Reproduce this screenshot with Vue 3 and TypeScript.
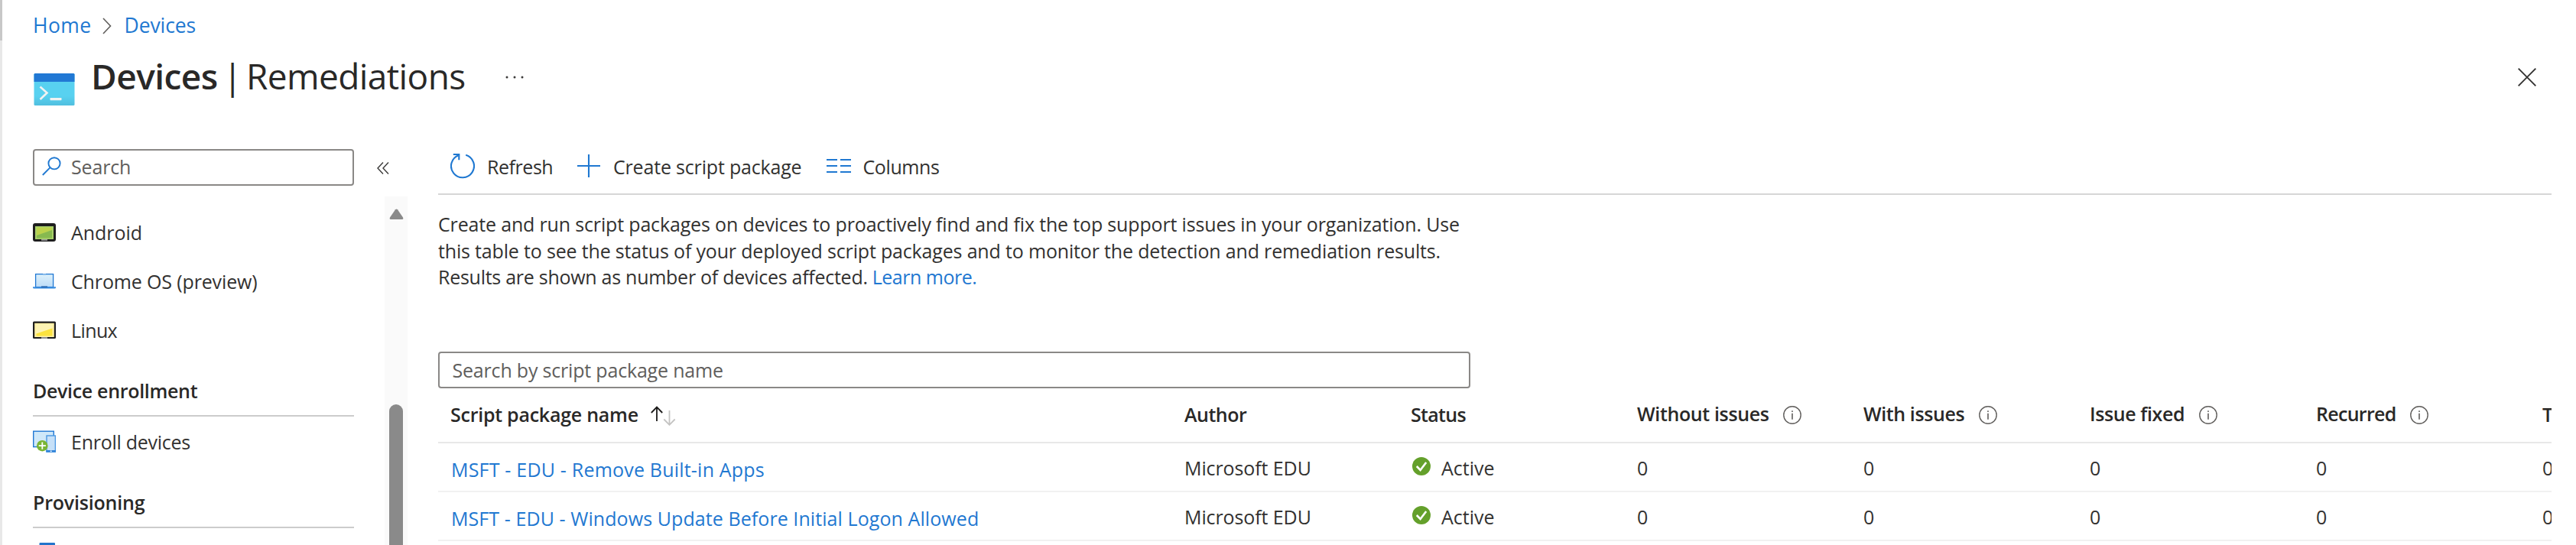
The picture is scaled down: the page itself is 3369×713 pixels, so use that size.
<script setup lang="ts">
interface Column { label: string; track: number; info?: boolean }
interface Row { name: string; track: number; author: string; status: string; counts: number[] }

const columns: Column[] = [
  { label: 'Author', track: -0.5 },
  { label: 'Status', track: -0.7 },
  { label: 'Without issues', track: -0.36, info: true },
  { label: 'With issues', track: -0.4, info: true },
  { label: 'Issue fixed', track: -0.4, info: true },
  { label: 'Recurred', track: -0.7, info: true },
  { label: 'Total', track: -0.4 },
]
const rows: Row[] = [
  { name: 'MSFT - EDU - Remove Built-in Apps', track: 0.2, author: 'Microsoft EDU', status: 'Active', counts: [0, 0, 0, 0, 0] },
  { name: 'MSFT - EDU - Windows Update Before Initial Logon Allowed', track: 0.08, author: 'Microsoft EDU', status: 'Active', counts: [0, 0, 0, 0, 0] },
]
const platforms = [
  { id: 'android', label: 'Android', track: -0.05 },
  { id: 'chrome', label: 'Chrome OS (preview)', track: -0.14 },
  { id: 'linux', label: 'Linux', track: -0.6 },
]
const ls = (px: number) => ({ letterSpacing: px + 'px' })
</script>

<template>
  <div class="page">
    <div class="edge"><div class="edge-top"></div></div>
    <header>
      <nav class="crumbs">
        <a class="home">Home</a>
        <svg width="12" height="22" viewBox="0 0 12 22"><path d="M1 1L10.5 11L1 21" fill="none" stroke="#605e5c" stroke-width="1.6" /></svg>
        <a class="dev">Devices</a>
      </nav>
      <div class="title-row">
        <svg class="blade-icon" width="54" height="44" viewBox="0 0 54 44">
          <defs><linearGradient id="term" x1="0" y1="0" x2="0" y2="1"><stop offset="0.7" stop-color="#58d1f0" /><stop offset="1" stop-color="#50bfdf" /></linearGradient></defs>
          <rect x="0.5" y="1" width="53" height="42" rx="1.5" fill="url(#term)" />
          <path d="M0.5 12V2.5Q0.5 1 2 1H52Q53.5 1 53.5 2.5V12Z" fill="#2178d4" />
          <path d="M8.5 18.5L17.5 26.5L8.5 35" fill="none" stroke="#f2f2f2" stroke-width="2.6" />
          <rect x="21.5" y="33" width="15" height="3.2" rx="0.6" fill="#f2f2f2" />
        </svg>
        <h1><b>Devices</b><span class="bar">|</span><span class="sub">Remediations</span></h1>
        <svg class="dots" width="24" height="4" viewBox="0 0 24 4" fill="#3b3a39"><circle cx="2" cy="2" r="1.5" /><circle cx="12" cy="2" r="1.5" /><circle cx="22" cy="2" r="1.5" /></svg>
        <svg class="close" width="24" height="24" viewBox="0 0 24 24"><path d="M0.7 0.7L23.3 23.3M23.3 0.7L0.7 23.3" stroke="#323130" stroke-width="1.9" /></svg>
      </div>
    </header>

    <div class="body">
      <aside>
        <div class="side-top">
          <div class="search side-search">
            <svg width="25" height="25" viewBox="0 0 25 25" fill="none" stroke="#1f78d1" stroke-width="1.9"><circle cx="16" cy="8.8" r="7.6" /><path d="M10.6 14.2L0.8 24" /></svg>
            <span>Search</span>
          </div>
          <svg class="collapse" width="16" height="16" viewBox="0 0 16 16" fill="none" stroke="#3b3a39" stroke-width="1.4"><path d="M8 0.5L1 8L8 15.5M15 0.5L8 8L15 15.5" /></svg>
        </div>
        <div class="side-list">
          <div class="menu">
            <div v-for="p in platforms" :key="p.id" class="item">
              <svg width="30" height="32" viewBox="0 0 30 32">
                <template v-if="p.id === 'android'">
                  <rect x="0" y="4" width="30" height="24" rx="3" fill="#1e1e1e" />
                  <rect x="3" y="8" width="24" height="17" fill="#a8d06a" />
                  <path d="M5 9.5H25V13L5 20Z" fill="#bcd24b" /><path d="M5 20L25 13V23.5H5Z" fill="#87b94f" />
                  <rect x="11" y="25" width="8" height="1.8" fill="#999" />
                </template>
                <template v-else-if="p.id === 'chrome'">
                  <defs><linearGradient id="lap" x1="0" y1="0" x2="0" y2="1"><stop offset="0" stop-color="#ddf1fb" /><stop offset="1" stop-color="#bddcf7" /></linearGradient></defs>
                  <rect x="3.6" y="6.6" width="23" height="17" fill="url(#lap)" stroke="#2178d4" stroke-width="1.3" />
                  <path d="M0 23.2H30V24.4Q30 25.4 28 25.4H2Q0 25.4 0 24.4Z" fill="#3a8de0" />
                  <rect x="11" y="22.4" width="8" height="1.8" fill="#2566b0" /><rect x="13" y="6" width="4" height="1.6" fill="#7db4ea" />
                </template>
                <template v-else>
                  <rect x="0" y="4.5" width="30" height="22.5" rx="1.5" fill="#1e1e1e" />
                  <rect x="2.2" y="6.8" width="25.6" height="18.2" fill="#fff0a6" />
                  <path d="M4.5 8.5H25.5V13.5L4.5 21Z" fill="#fdf3b4" /><path d="M4.5 20.5L25.5 13.5V23.5H4.5Z" fill="#fbe23f" />
                  <rect x="11" y="25" width="8" height="2" fill="#8c8c8c" />
                </template>
              </svg>
              <span :style="ls(p.track)">{{ p.label }}</span>
            </div>
            <h2 class="enr">Device enrollment</h2>
            <div class="item">
              <svg width="30" height="32" viewBox="0 0 30 32">
                <rect x="0.7" y="2.2" width="26.6" height="20.4" fill="#cfe8f9" stroke="#2178d4" stroke-width="1.4" />
                <rect x="18" y="8" width="11.4" height="21" fill="#c6e0f8" stroke="#4a97e2" stroke-width="1.4" />
                <rect x="17.3" y="27" width="12.7" height="2.6" fill="#2f83d9" /><rect x="22.8" y="27.6" width="1.8" height="1.4" fill="#fff" />
                <circle cx="12.3" cy="21.2" r="7.3" fill="#7ab535" />
                <path d="M12.3 16.6V25.8M7.7 21.2H16.9" stroke="#fff" stroke-width="1.8" />
              </svg>
              <span class="enr-item">Enroll devices</span>
            </div>
            <h2 class="prov">Provisioning</h2>
            <div class="item cut">
              <svg width="30" height="28" viewBox="0 0 30 28"><rect x="8.5" y="0" width="20.5" height="26" rx="1" fill="#2374cb" /></svg>
            </div>
          </div>
          <div class="scroll">
            <svg width="19" height="15" viewBox="0 0 19 15"><path d="M8 1.2Q9.5 -0.4 11 1.2L18 11.5Q19 14 17 14H2Q0 14 1 11.5Z" fill="#8a8a8a" /></svg>
            <div class="thumb"></div>
          </div>
        </div>
      </aside>

      <main>
        <div class="toolbar">
          <svg class="ref" width="32" height="34" viewBox="0 0 32 34" fill="none" stroke="#1f78d1" stroke-width="2.1"><path d="M20.2 2.8A15 15 0 1 1 10.6 3.2" /><path d="M3.8 2H11.3V9.2" /></svg>
          <span class="t-ref">Refresh</span>
          <svg class="plus" width="30" height="30" viewBox="0 0 30 30"><path d="M15 0V30M0 15H30" stroke="#1f78d1" stroke-width="2.1" /></svg>
          <span class="t-create">Create script package</span>
          <svg class="cols" width="32" height="18" viewBox="0 0 32 18"><path d="M0 1H14M18 1H32M0 9H14M18 9H32M0 17H14M18 17H32" stroke="#1f78d1" stroke-width="2" /></svg>
          <span class="t-cols">Columns</span>
        </div>
        <p class="intro">
          <span class="l1">Create and run script packages on devices to proactively find and fix the top support issues in your organization. Use</span><br>
          <span class="l2">this table to see the status of your deployed script packages and to monitor the detection and remediation results.</span><br>
          <span class="l3">Results are shown as number of devices affected.</span><a>Learn more.</a>
        </p>
        <div class="search main-search"><span>Search by script package name</span></div>
        <div class="table">
          <div class="row head">
            <div class="cell">
              <span class="spn">Script package name</span>
              <svg class="sort" width="34" height="26" viewBox="0 0 34 26" fill="none" stroke-width="1.8"><path d="M9 20V2M1.8 9L9 1.6L16.2 9" stroke="#1b1a19" /><path d="M25.5 6V24M18.3 17.5L25.5 24.8L32.7 17.5" stroke="#c4c3c2" /></svg>
            </div>
            <div v-for="c in columns" :key="c.label" class="cell" :class="{ metric: c.info }">
              <span :style="ls(c.track)">{{ c.label }}</span>
              <svg v-if="c.info" class="info" width="24" height="24" viewBox="0 0 24 24"><circle cx="12" cy="12" r="11.2" fill="none" stroke="#605e5c" stroke-width="1.4" /><path d="M12 9.8V17.8M12 6.2V8" stroke="#605e5c" stroke-width="1.6" /></svg>
            </div>
          </div>
          <div v-for="r in rows" :key="r.name" class="row">
            <div class="cell link"><a :style="ls(r.track)">{{ r.name }}</a></div>
            <div class="cell author">{{ r.author }}</div>
            <div class="cell status">
              <svg width="24" height="24" viewBox="0 0 24 24"><circle cx="12" cy="12" r="12" fill="#64a02b" /><path d="M5.8 12L10.6 17L18.2 7" fill="none" stroke="#fff" stroke-width="2.6" /></svg>
              <span>{{ r.status }}</span>
            </div>
            <div v-for="(n, i) in r.counts" :key="i" class="cell">{{ n }}</div>
          </div>
        </div>
      </main>
    </div>
  </div>
</template>

<style>
body { background: #fff; }
</style>
<style scoped>
.page { position: relative; width: 3369px; height: 713px; overflow: hidden; box-sizing: border-box; padding-left: 44px; font: 25px/34px "Open Sans", "Noto Sans", sans-serif; color: #323130; background: #fff; }
.page * { box-sizing: border-box; }
svg { display: block; flex: none; }
span, a { white-space: nowrap; }
a { color: #1f78d1; }
.edge { position: absolute; left: 0; top: 0; width: 3px; height: 713px; background: #e8e8e8; }
.edge-top { height: 53px; background: #c8c8c8; }
header { height: 194px; padding-top: 15px; }
.crumbs { display: flex; align-items: center; height: 36px; line-height: 36px; font-size: 26.5px; margin-left: -1px; }
.home { letter-spacing: 0.4px; width: 91px; }
.crumbs svg { margin-top: 2px; }
.dev { letter-spacing: -0.1px; margin-left: 16.5px; }
.title-row { display: flex; align-items: flex-start; padding-top: 16px; }
.blade-icon { margin-top: 27.5px; }
h1 { display: flex; margin: 0 0 0 21px; font-size: 46px; line-height: 64px; font-weight: 400; letter-spacing: -0.52px; color: #292827; width: 508px; }
h1 b { font-weight: 600; width: 172.5px; }
h1 .bar { width: 30.5px; }
h1 .sub { letter-spacing: -0.6px; }
.dots { margin: 32px 0 0 34px; }
.close { margin: 22px 52px 0 auto; }
.body { display: flex; height: 519px; }
aside { width: 529px; flex: none; padding-top: 1px; margin-left: -1px; }
.side-top { display: flex; height: 62px; align-items: flex-start; }
.search { border: 2px solid #8a8886; border-radius: 4px; height: 48px; display: flex; align-items: center; color: #605e5c; background: #fff; }
.side-search { width: 420px; padding-left: 10px; letter-spacing: -0.15px; }
.side-search svg { margin-top: -3px; }
.side-search span { margin: -2px 0 0 13px; }
.collapse { margin: 17px 0 0 30px; }
.side-list { display: flex; height: 456px; overflow: hidden; }
.menu { width: 420px; padding-top: 15px; flex: none; }
.item { display: flex; align-items: center; height: 64px; line-height: 64px; }
.item svg { margin-right: 20px; }
h2 { margin: 27px 0 1px; height: 54px; line-height: 40px; font-size: 25px; font-weight: 600; border-bottom: 2px solid #cccccc; color: #292827; }
.enr { letter-spacing: -0.32px; }
.prov { letter-spacing: -0.2px; }
.enr-item { letter-spacing: -0.26px; }
.cut { align-items: flex-start; padding-top: 18px; }
.scroll { margin-left: 40px; width: 30px; background: #fafafa; height: 456px; padding: 16px 0 0 6px; }
.thumb { width: 18px; height: 300px; margin-top: 241px; border-radius: 9px; background: #8a8a8a; }
main { width: 2764px; margin-left: 1px; flex: none; overflow: hidden; }
.toolbar { display: flex; height: 61px; border-bottom: 2px solid #d6d6d6; line-height: 48px; }
.ref { margin: 6px 0 0 16px; }
.t-ref { margin-left: 16px; width: 94px; letter-spacing: -0.45px; }
.plus { margin: 8px 0 0 24px; }
.t-create { margin-left: 17px; width: 262px; letter-spacing: -0.18px; }
.cols { margin: 14px 0 0 17px; }
.t-cols { margin-left: 15.5px; letter-spacing: -0.4px; }
.intro { margin: 21px 0 0; height: 184px; line-height: 34.7px; }
.l1 { letter-spacing: -0.163px; }
.l2 { letter-spacing: -0.17px; }
.l3 { letter-spacing: -0.27px; }
.intro a { margin-left: 6px; letter-spacing: -0.48px; }
.main-search { width: 1350px; padding-left: 16.5px; letter-spacing: -0.19px; }
.main-search span { margin-top: -1px; }
.table { width: 3032px; }
.row { display: grid; grid-template-columns: 960px repeat(7, 296px); height: 64px; border-bottom: 2px solid #f1f1f1; }
.head { height: 72px; border-bottom-color: #e8e8e8; font-weight: 600; color: #292827; }
.cell { padding: 15px 0 0 16px; display: flex; align-items: flex-start; }
.head .cell { padding-top: 17px; }
.head .metric { padding-top: 16px; }
.cell.link { padding: 17px 0 0 17px; }
.cell.author { letter-spacing: -0.1px; }
.spn { letter-spacing: -0.25px; }
.sort { margin: 6px 0 0 15px; }
.info { margin: 7px 0 0 18.5px; }
.status svg { margin: 3px 14px 0 2px; }
</style>
